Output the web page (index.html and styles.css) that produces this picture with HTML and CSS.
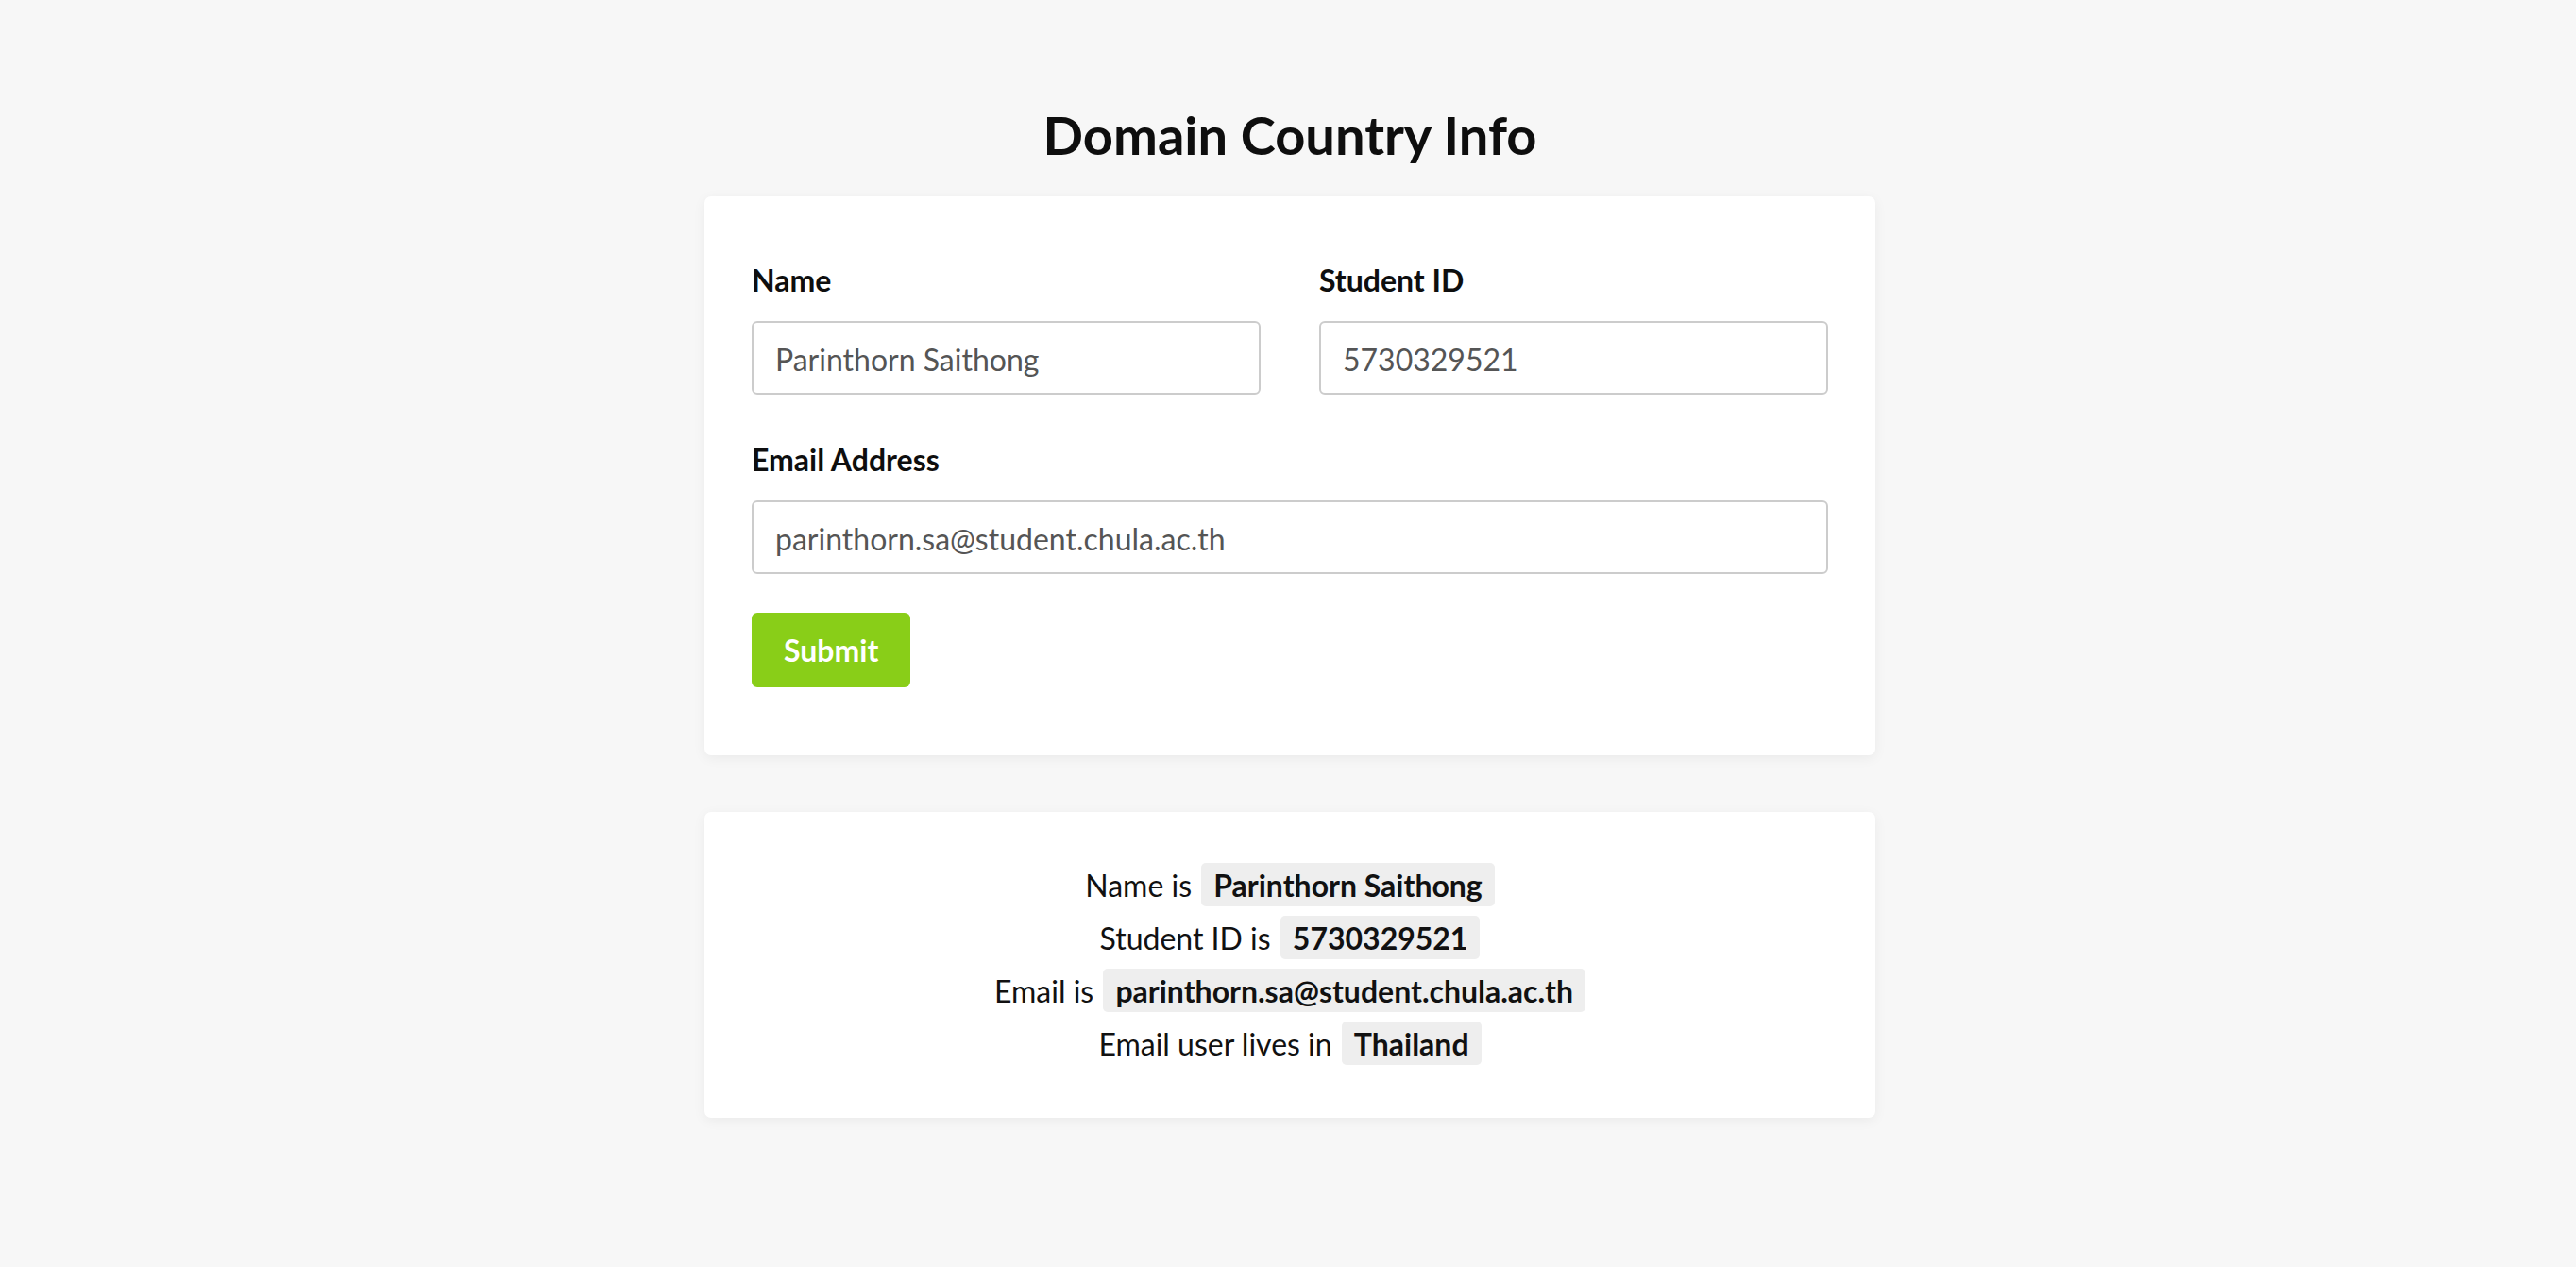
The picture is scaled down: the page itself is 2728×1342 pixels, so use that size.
FILE: index.html
```html
<!DOCTYPE html>
<html lang="en">
<head>
<meta charset="utf-8">
<title>Domain Country Info</title>
<link rel="stylesheet" href="styles.css">
</head>
<body>
<main class="page">
  <h1 class="title">Domain Country Info</h1>
  <form class="card form-card">
    <div class="row two">
      <div class="field">
        <label class="label" for="name">Name</label>
        <input class="input" id="name" type="text" value="Parinthorn Saithong">
      </div>
      <div class="field">
        <label class="label" for="sid">Student ID</label>
        <input class="input" id="sid" type="text" value="5730329521">
      </div>
    </div>
    <div class="row">
      <div class="field">
        <label class="label" for="email">Email Address</label>
        <input class="input" id="email" type="text" value="parinthorn.sa@student.chula.ac.th">
      </div>
    </div>
    <button class="btn" type="button">Submit</button>
  </form>
  <section class="card result-card">
    <p class="line">Name is <span class="pill">Parinthorn Saithong</span></p>
    <p class="line">Student ID is <span class="pill">5730329521</span></p>
    <p class="line">Email is <span class="pill">parinthorn.sa@student.chula.ac.th</span></p>
    <p class="line">Email user lives in <span class="pill">Thailand</span></p>
  </section>
</main>
</body>
</html>
```

FILE: styles.css
```css
html, body {
  margin: 0;
  padding: 0;
  background: #f7f7f7;
  font-family: "Lato", "Open Sans", "Liberation Sans", sans-serif;
  color: #111111;
}

.page {
  width: 1240px;
  margin: 0 0 0 calc(50% - 618px);
  padding: 108px 0 120px;
}

.title {
  margin: 0 0 32px;
  padding-top: 1px;
  font-size: 56px;
  font-weight: 700;
  line-height: normal;
  text-align: center;
  color: #0e0e0e;
}

.card {
  background: #ffffff;
  border-radius: 7px;
  box-shadow: 0 3px 14px rgba(0, 0, 0, 0.055);
}

.form-card {
  display: flex;
  flex-direction: column;
  padding: 69px 50px 72px;
}

.row {
  display: grid;
  grid-template-columns: 1fr;
  margin-bottom: 49px;
}

.row.two {
  grid-template-columns: 1fr 1fr;
  column-gap: 62px;
}

.row:nth-of-type(2) {
  margin-bottom: 41px;
}

.field {
  display: flex;
  flex-direction: column;
}

.label {
  font-size: 32px;
  font-weight: 700;
  line-height: normal;
  margin-bottom: 24px;
  color: #0e0e0e;
}

.input {
  box-sizing: border-box;
  height: 78px;
  padding: 3px 23px 0;
  border: 2px solid #cccccc;
  border-radius: 6px;
  background: #ffffff;
  font-family: inherit;
  font-size: 32px;
  color: #555555;
  outline: none;
}

.btn {
  align-self: flex-start;
  box-sizing: border-box;
  height: 79px;
  padding: 0 34px;
  border: none;
  border-radius: 6px;
  background: #89ce18;
  color: #ffffff;
  font-family: inherit;
  font-size: 32px;
  font-weight: 700;
  cursor: pointer;
}

.result-card {
  margin-top: 60px;
  padding: 50px;
  text-align: center;
}

.line {
  margin: 0;
  font-size: 32px;
  line-height: 56px;
  color: #111111;
}

.pill {
  margin-left: 2px;
  padding: 4px 13px 3px;
  border-radius: 5px;
  background: #eeeeee;
  font-weight: 700;
}
```
